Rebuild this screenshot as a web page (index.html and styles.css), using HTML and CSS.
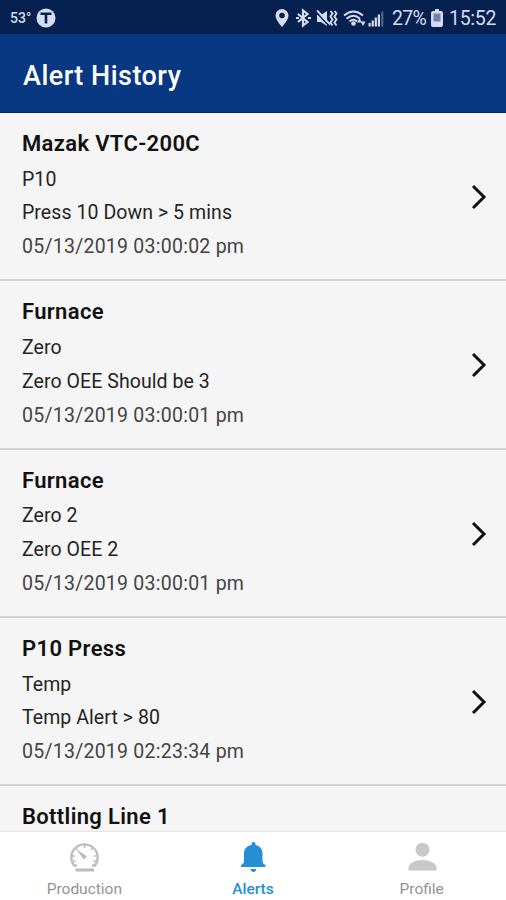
FILE: index.html
```html
<!DOCTYPE html>
<html lang="en">
<head>
<meta charset="utf-8">
<title>Alert History</title>
<link rel="stylesheet" href="styles.css">
</head>
<body>
<div class="status">
  <span class="temp">53°</span>
  <svg class="badge" width="20" height="20" viewBox="0 0 20 20"><circle cx="10" cy="10" r="9.5" fill="#d5dcf0"/><path d="M4.500 5.800h11M10 6v9.500" stroke="#06204f" stroke-width="2.600" fill="none"/></svg>
  <svg class="icons" width="114" height="24" viewBox="0 0 114 24">
    <g fill="#d5dcf0">
      <path fill-rule="evenodd" d="M8 3a6.500 6.500 0 0 0-6.500 6.500C1.500 14 8 21 8 21s6.500-7 6.500-11.500A6.500 6.500 0 0 0 8 3zm0 3.700a2.800 2.800 0 1 1 0 5.600 2.800 2.800 0 0 1 0-5.600z"/>
      <path d="M43 9h4l6-4v15l-6-4h-4z"/>
      <circle cx="79.500" cy="17.500" r="2.300"/>
      <path d="M85.500 12l2.500 4.500h-5zM89 20l-2.500-4.500h5z"/>
      <path d="M94.500 17h2.200v3.500h-2.200zM97.600 14.500h2.200v6h-2.200zM100.700 11.500h2.200v9h-2.200zM103.800 8.500h2.200v12h-2.200z"/>
      <path d="M107.300 5.500h2v15h-2z" opacity=".4"/>
    </g>
    <g fill="none" stroke="#d5dcf0">
      <path d="M24 8l9.500 8-4.500 3.500V4.500L33.500 8 24 16M22 12h3M34 12h3" stroke-width="2.200"/>
      <path d="M43 4.500l13 14" stroke-width="2"/>
      <path d="M56.500 5l2 2.500-2 3 2 3-2 3 2 3M60.500 5l2 2.500-2 3 2 3-2 3 2 3" stroke-width="1.900"/>
      <path d="M70 9.500q9.500-8 19 0M72.500 12.700q7-6 13.500 0M75.500 15.500q4-3.500 7.500 0" stroke-width="2"/>
    </g>
    <path d="M41.500 5.500l13 14" stroke="#06204f" stroke-width="1.300"/>
  </svg>
  <span class="percent">27%</span>
  <svg class="battery" width="12" height="18" viewBox="0 0 12 18"><path d="M4 0h4v2h2q2 0 2 2v12q0 2-2 2H2q-2 0-2-2V4q0-2 2-2h2z" fill="#d5dcf0"/><path d="M2.500 4.500h7v8h-7z" fill="#7484a9"/></svg>
  <span class="clock">15:52</span>
</div>
<header class="appbar"><h1>Alert History</h1></header>
<main class="list">
  <article class="item">
    <div class="copy"><h2>Mazak VTC-200C</h2><p>P10</p><p>Press 10 Down &gt; 5 mins</p><p class="date">05/13/2019 03:00:02 pm</p></div>
    <svg class="chevron" width="18" height="28" viewBox="0 0 18 28"><path d="M3 3l11 11L3 25"/></svg>
  </article>
  <article class="item">
    <div class="copy"><h2>Furnace</h2><p>Zero</p><p>Zero OEE Should be 3</p><p class="date">05/13/2019 03:00:01 pm</p></div>
    <svg class="chevron" width="18" height="28" viewBox="0 0 18 28"><path d="M3 3l11 11L3 25"/></svg>
  </article>
  <article class="item">
    <div class="copy"><h2>Furnace</h2><p>Zero 2</p><p>Zero OEE 2</p><p class="date">05/13/2019 03:00:01 pm</p></div>
    <svg class="chevron" width="18" height="28" viewBox="0 0 18 28"><path d="M3 3l11 11L3 25"/></svg>
  </article>
  <article class="item">
    <div class="copy"><h2>P10 Press</h2><p>Temp</p><p>Temp Alert &gt; 80</p><p class="date">05/13/2019 02:23:34 pm</p></div>
    <svg class="chevron" width="18" height="28" viewBox="0 0 18 28"><path d="M3 3l11 11L3 25"/></svg>
  </article>
  <article class="item">
    <div class="copy"><h2>Bottling Line 1</h2></div>
  </article>
</main>
<nav class="tabs">
  <a class="tab">
    <svg width="32" height="32" viewBox="0 0 32 32" fill="none" stroke="#bdbdbd"><path d="M9 24.500H6a13.200 13.200 0 1 1 21 0h-3" stroke-width="2.300"/><path d="M16.500 4v3M4 15h3M26 15h3M7.500 7l2 2M25 7l-2 2M5 20.500l2.500-1M28 20.500l-2.500-1" stroke-width="1.500"/><path d="M9.500 9.500l9 6-2.500 2.500z" fill="#bdbdbd" stroke-width="1"/><path d="M7.500 29h18.500" stroke-width="3"/></svg>
    <span>Production</span>
  </a>
  <a class="tab active">
    <svg width="32" height="32" viewBox="0 0 32 32" fill="#258fd6"><path d="M16.500 1a2 2 0 0 1 2 2v1c4.500 1 7 4 7 8.500V20c0 2 1 3 3 4v2H4v-2c2-1 3-2 3-4v-7.500C7 8 9.500 5 14.500 4V3a2 2 0 0 1 2-2z"/><path d="M13.500 28h6q-.5 3-3 3t-3-3z"/></svg>
    <span>Alerts</span>
  </a>
  <a class="tab">
    <svg width="32" height="32" viewBox="0 0 32 32" fill="#c8c8c8"><circle cx="16.500" cy="8.800" r="7"/><path d="M2.500 29.500V27c0-5 7-8 14-8s14 3 14 8v2.500z"/></svg>
    <span>Profile</span>
  </a>
</nav>
</body>
</html>
```
FILE: styles.css
```css
* { box-sizing: border-box; margin: 0; padding: 0; }
body {
  width: 506px; height: 900px; overflow: hidden;
  display: flex; flex-direction: column;
  font-family: Roboto, sans-serif; background: #f5f5f5; color: #111;
}
.status {
  flex: none; height: 34px; padding: 2px 11px 0 10px;
  display: flex; align-items: center;
  background: #06204f; color: #d5dcf0; white-space: nowrap;
}
.temp { width: 26px; font-size: 14px; font-weight: 500; }
.badge { flex: none; }
.icons { flex: none; margin-left: auto; }
.percent { margin-left: 4px; width: 35px; font-size: 19.5px; letter-spacing: -0.7px; }
.battery { flex: none; margin-left: 4px; }
.clock { margin-left: 6px; width: 46px; font-size: 19.5px; letter-spacing: -0.3px; }
.appbar {
  flex: none; height: 79px; padding: 5px 23px 0; display: flex; align-items: center;
  background: #083882; color: #fff; border-bottom: 1px solid #082464;
}
h1 { font-size: 27px; font-weight: 500; line-height: 34px; letter-spacing: 0.48px; }
.list { flex: 1; min-height: 0; overflow: hidden; }
.item {
  height: 168.3px; padding: 13px 18px 0 22px; display: flex; justify-content: space-between;
  border-bottom: 2px solid #d2d2d2;
}
.copy { white-space: nowrap; }
h2 { font-size: 22px; font-weight: 600; line-height: 36px; margin-bottom: 0.7px; letter-spacing: 0.35px; }
p { font-size: 19.5px; line-height: 33.8px; letter-spacing: 0.07px; color: #242424; }
.date { color: #444; letter-spacing: 0.25px; }
.chevron { flex: none; margin-top: 57px; fill: none; stroke: #111; stroke-width: 3; }
.tabs {
  flex: none; height: 69px; display: flex; background: #fff;
  border-top: 1px solid #e4e4e4;
}
.tab { flex: 1; padding-top: 9px; display: flex; flex-direction: column; align-items: center; color: #939393; }
.tab span { margin-top: 6px; font-size: 15.5px; line-height: 20px; }
.active { color: #258fd6; }
.active span { font-weight: 500; }
```
